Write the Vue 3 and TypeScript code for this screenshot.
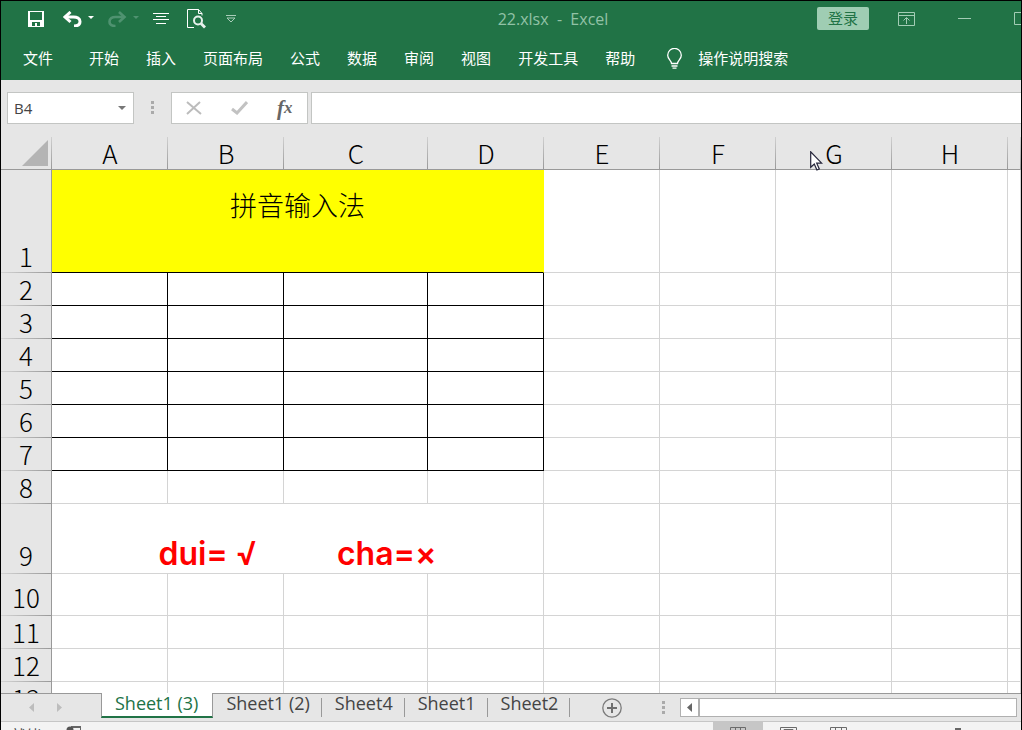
<script setup lang="ts">
import { ref } from 'vue'

interface Row {
  n: number
  size: string
}

const menus: string[] = ['文件', '开始', '插入', '页面布局', '公式', '数据', '审阅', '视图', '开发工具', '帮助']
const columns: string[] = ['A', 'B', 'C', 'D', 'E', 'F', 'G', 'H', '']
const rows: Row[] = [
  { n: 1, size: 'title' },
  ...[2, 3, 4, 5, 6, 7, 8].map((n) => ({ n, size: 'normal' })),
  { n: 9, size: 'tall' },
  { n: 10, size: 'medium' },
  { n: 11, size: 'normal' },
  { n: 12, size: 'normal' },
  { n: 13, size: 'normal' },
]
const sheets: string[] = ['Sheet1 (3)', 'Sheet1 (2)', 'Sheet4', 'Sheet1', 'Sheet2']

const activeSheet = ref(0)
const cellName = ref('B4')
const formula = ref('')

const isMerged = (n: number): boolean => n === 1 || n === 9
const isBoxed = (n: number, c: number): boolean => n >= 2 && n <= 7 && c < 4
</script>

<template>
  <div class="window">
    <header class="top">
      <div class="titlebar">
        <div class="quick">
          <button class="icon-btn save" aria-label="保存">
            <svg width="16" height="16" viewBox="0 0 16 16"><path fill="#fff" fill-rule="evenodd" d="M0 0h16v16H0zM2 1v8h12V1zM4 11v4h3v-3h2v3h3v-4z" /></svg>
          </button>
          <button class="icon-btn undo" aria-label="撤消">
            <svg width="32" height="16" viewBox="0 0 32 16"><path d="M2 6h8.500c3.500 0 6.500 1.500 6.500 4.500S14.500 15 11 15" fill="none" stroke="#fff" stroke-width="3" /><path d="M7.500 1L2 6l5.500 5" fill="none" stroke="#fff" stroke-width="3" /><path d="M25 5h6l-3 3z" fill="#fff" /></svg>
          </button>
          <button class="icon-btn redo" aria-label="恢复">
            <svg width="32" height="16" viewBox="0 0 32 16"><g fill="none" stroke="#4f9270" stroke-width="2.600"><path d="M16 6H7.500C4 6 1.500 7.500 1.500 10.500S4 15 7.500 15" /><path d="M11 1l5.500 5-5.500 5" /></g><path d="M25 5h6l-3 3z" fill="#4f9270" /></svg>
          </button>
          <button class="icon-btn align" aria-label="居中">
            <svg width="16" height="11" viewBox="0 0 16 11"><path d="M0 .5h16M3 3.500h10M0 6.500h16M3 10.500h10" stroke="#fff" /></svg>
          </button>
          <button class="icon-btn preview" aria-label="打印预览">
            <svg width="19" height="20" viewBox="0 0 19 20"><path d="M7 18.500H.5V.5h11l3.500 4v2M11.500.5v4H15" fill="none" stroke="#fff" /><circle cx="11" cy="11.500" r="4" fill="none" stroke="#e8f1ec" stroke-width="2" /><path d="M14 14.500l4 4" stroke="#e8f1ec" stroke-width="2.800" /></svg>
          </button>
          <button class="icon-btn more" aria-label="自定义快速访问工具栏">
            <svg width="10" height="8" viewBox="0 0 10 8"><path d="M0 .5h10M1 3l4 4 4-4z" fill="none" stroke="#a9cdb9" /></svg>
          </button>
        </div>
        <h1 class="doc-title">22.xlsx&nbsp; - &nbsp;Excel</h1>
        <div class="window-tools">
          <button class="login">登录</button>
          <button class="icon-btn ribbon-opt" aria-label="功能区显示选项">
            <svg width="17" height="14" viewBox="0 0 17 14"><path d="M.5.5h16v13H.5zM1 3.500h15M8.500 12V6M5.500 8.500l3-3 3 3" fill="none" stroke="#a3ccb5" /></svg>
          </button>
          <button class="icon-btn minimize" aria-label="最小化">
            <svg width="13" height="3" viewBox="0 0 13 3"><path d="M0 1.500h13" stroke="#a3ccb5" /></svg>
          </button>
          <button class="icon-btn maximize" aria-label="最大化">
            <svg width="14" height="14" viewBox="0 0 14 14"><path d="M.5.5h13v12H.5z" fill="none" stroke="#a3ccb5" /></svg>
          </button>
        </div>
      </div>
      <nav class="menu">
        <button v-for="m in menus" :key="m" class="menu-item">{{ m }}</button>
        <button class="menu-item tell">
          <svg width="15" height="21" viewBox="0 0 15 21"><path d="M4.500 15.500c0-3-3.800-4-3.800-8.300a6.800 6.800 0 0 1 13.600 0c0 4.300-3.800 5.300-3.800 8.300zM4.500 18h6M5.500 20.200h4" fill="none" stroke="#fff" stroke-width="1.300" /></svg>
          <span>操作说明搜索</span>
        </button>
      </nav>
    </header>

    <section class="formula-bar">
      <div class="name-box">
        <input v-model="cellName" aria-label="名称框" />
        <button class="icon-btn" aria-label="名称列表">
          <svg width="8" height="4" viewBox="0 0 8 4"><path d="M0 0h8L4 4z" fill="#777" /></svg>
        </button>
      </div>
      <svg class="grip" width="3" height="13" viewBox="0 0 3 13"><path d="M0 0h3v3H0zM0 5h3v3H0zM0 10h3v3H0z" fill="#aaa" /></svg>
      <div class="fx-group">
        <button class="icon-btn" aria-label="取消">
          <svg width="16" height="14" viewBox="0 0 16 14"><path d="M1 1l14 12M14 1L1 13" stroke="#bcbcbc" stroke-width="2" /></svg>
        </button>
        <button class="icon-btn" aria-label="输入">
          <svg width="17" height="14" viewBox="0 0 17 14"><path d="M1 8l5 4L16 1" fill="none" stroke="#c2c2c2" stroke-width="3" /></svg>
        </button>
        <button class="icon-btn fx" aria-label="插入函数"><i>f</i><i class="fx-x">x</i></button>
      </div>
      <input v-model="formula" class="formula" aria-label="编辑栏" />
    </section>

    <main class="grid-area">
      <table class="grid">
        <colgroup>
          <col class="col-head" />
          <col v-for="(c, i) in columns" :key="i" :class="i === 8 ? 'col-rest' : i === 2 ? 'col-wide' : 'col-std'" />
        </colgroup>
        <thead>
          <tr>
            <th class="corner" aria-label="全选">
              <svg width="26" height="26" viewBox="0 0 26 26"><path d="M26 0v26H0z" fill="#b4b4b4" /></svg>
            </th>
            <th v-for="(c, i) in columns" :key="i" scope="col">{{ c }}</th>
          </tr>
        </thead>
        <tbody>
          <tr v-for="r in rows" :key="r.n" :class="r.size">
            <th scope="row">{{ r.n }}</th>
            <td v-if="r.n === 1" colspan="4" class="heading">拼音输入法</td>
            <td v-if="r.n === 9" colspan="4" class="legend">
              <div class="legend-line"><span>dui= √</span><span>cha=×</span></div>
            </td>
            <template v-for="(c, i) in columns" :key="i">
              <td v-if="!isMerged(r.n) || i > 3" :class="{ boxed: isBoxed(r.n, i) }"></td>
            </template>
          </tr>
        </tbody>
      </table>
      <svg class="pointer" width="13" height="20" viewBox="0 0 13 20"><path d="M.7.8v15.500l3.600-3.300 2.600 6 2.400-1-2.600-5.800h5z" fill="#fff" stroke="#25253a" stroke-width="1.200" /></svg>
    </main>

    <footer class="sheet-bar">
      <div class="sheet-nav">
        <button class="icon-btn" aria-label="上一张">
          <svg width="5" height="9" viewBox="0 0 5 9"><path d="M5 0v9L0 4.500z" fill="#bdbdbd" /></svg>
        </button>
        <button class="icon-btn" aria-label="下一张">
          <svg width="5" height="9" viewBox="0 0 5 9"><path d="M0 0v9l5-4.500z" fill="#bdbdbd" /></svg>
        </button>
      </div>
      <button
        v-for="(s, i) in sheets"
        :key="i"
        class="sheet"
        :class="{ active: i === activeSheet }"
        @click="activeSheet = i"
      >{{ s }}</button>
      <button class="icon-btn add" aria-label="新工作表">
        <svg width="20" height="20" viewBox="0 0 20 20"><circle cx="10" cy="10" r="9.200" fill="none" stroke="#7b7b7b" stroke-width="1.300" /><path d="M5 10h10M10 5v10" stroke="#6f6f6f" stroke-width="2" /></svg>
      </button>
      <svg class="tab-grip" width="3" height="13" viewBox="0 0 3 13"><path d="M0 0h3v3H0zM0 5h3v3H0zM0 10h3v3H0z" fill="#aaa" /></svg>
      <div class="scroll">
        <button class="icon-btn scroll-left" aria-label="向左滚动">
          <svg width="5" height="9" viewBox="0 0 5 9"><path d="M5 0v9L0 4.500z" fill="#666" /></svg>
        </button>
        <div class="thumb"></div>
      </div>
    </footer>

    <div class="status">
      <span class="ready">就绪</span>
      <svg class="macro" width="15" height="14" viewBox="0 0 15 14"><path d="M5 1h10v12H3V7" fill="none" stroke="#666" stroke-width="2" /><circle cx="4" cy="4" r="3.500" fill="#555" /></svg>
      <div class="views">
        <button class="icon-btn view on" aria-label="普通">
          <svg width="16" height="14" viewBox="0 0 16 14"><path d="M.5.5h15v13H.5zM5.500 0v14M10.500 0v14M0 5h16M0 9.500h16" fill="none" stroke="#6b6b6b" /></svg>
        </button>
        <button class="icon-btn view" aria-label="页面布局">
          <svg width="17" height="14" viewBox="0 0 17 14"><path d="M.5.5h16v13H.5zM4 2.500h9v9H4zM6 5h5M6 7.500h5" fill="none" stroke="#6b6b6b" /></svg>
        </button>
        <button class="icon-btn view" aria-label="分页预览">
          <svg width="17" height="14" viewBox="0 0 17 14"><path d="M.5.5h16v13H.5zM5.500 0v8M11.500 0v8M0 8h17" fill="none" stroke="#6b6b6b" /></svg>
        </button>
      </div>
      <span class="zoom-thumb"></span>
    </div>
  </div>
</template>

<style>
html,
body {
  margin: 0;
  overflow: hidden;
}
</style>

<style scoped>
* {
  box-sizing: border-box;
}
.window {
  display: flex;
  flex-direction: column;
  height: 100vh;
  overflow: hidden;
  border: 1px solid #000;
  border-bottom: 0;
  background: #e6e6e6;
  font-family: "Open Sans", "Noto Sans CJK SC", sans-serif;
  color: #444;
}
button,
input {
  margin: 0;
  padding: 0;
  border: 0;
  background: none;
  font: inherit;
  color: inherit;
}
svg {
  display: block;
  flex: none;
}
.icon-btn {
  display: flex;
  align-items: center;
  justify-content: center;
  flex: none;
}
.top {
  flex: none;
  background: #217346;
  color: #fff;
}
.titlebar {
  display: grid;
  grid-template-columns: 1fr auto 1fr;
  align-items: center;
  height: 35px;
}
.quick {
  display: flex;
  align-items: center;
  padding-left: 27px;
}
.undo {
  margin-left: 19px;
}
.redo {
  margin-left: 13px;
}
.align {
  margin-left: 13px;
}
.preview {
  margin-left: 18px;
}
.more {
  margin-left: 20px;
}
.doc-title {
  margin: 0 0 0 84px;
  font-size: 16px;
  line-height: 24px;
  font-weight: 400;
  color: #92c2a6;
}
.window-tools {
  display: flex;
  align-items: center;
  justify-content: flex-end;
  overflow: hidden;
  height: 100%;
}
.login {
  flex: none;
  width: 52px;
  height: 23px;
  border-radius: 2px;
  background: #9fcdb3;
  color: #217346;
  font-size: 15px;
  line-height: 23px;
}
.ribbon-opt {
  margin-left: 29px;
}
.minimize {
  margin-left: 43px;
}
.maximize {
  margin: 0 -7px 0 43px;
}
.menu {
  display: flex;
  align-items: center;
  gap: 27px;
  height: 44px;
  padding: 0 0 0 22px;
  font-size: 15px;
}
.menu-item {
  flex: none;
  line-height: 24px;
}
.menu-item:first-child {
  margin-right: 9px;
}
.tell {
  display: flex;
  align-items: center;
  gap: 16px;
  margin-left: 5px;
}
.formula-bar {
  flex: none;
  display: flex;
  align-items: center;
  height: 57px;
  padding: 0 0 2px 6px;
}
.name-box,
.fx-group,
.formula {
  height: 32px;
  border: 1px solid #c3c5c3;
  background: #fff;
}
.name-box {
  display: flex;
  align-items: center;
  width: 127px;
  padding: 0 7px 0 6px;
}
.name-box input {
  flex: 1;
  min-width: 0;
  font-size: 15px;
}
.grip {
  margin: 0 17px;
}
.fx-group {
  display: flex;
  align-items: center;
  gap: 29px;
  width: 137px;
  margin-right: 3px;
  padding-left: 14px;
}
.fx {
  font-family: "Liberation Serif", serif;
  font-size: 21px;
  line-height: 24px;
  font-weight: 700;
  color: #666;
}
.fx-x {
  font-size: 17px;
}
.formula {
  flex: 1;
  min-width: 0;
  border-right: 0;
  padding: 0 6px;
  font-size: 15px;
}
.grid-area {
  position: relative;
  flex: 1;
  min-height: 0;
  overflow: hidden;
  background: #fff;
}
.grid {
  width: 100%;
  table-layout: fixed;
  border-collapse: separate;
  border-spacing: 0;
  font-family: "Noto Sans CJK SC", sans-serif;
}
.col-head {
  width: 51px;
}
.col-std {
  width: 116px;
}
.col-wide {
  width: 144px;
}
th,
td {
  padding: 0;
}
th {
  font-size: 26px;
  line-height: 28px;
  font-weight: 300;
  color: #000;
  background: #e6e6e6;
}
thead th {
  height: 33px;
  border-bottom: 1px solid #999;
  background: linear-gradient(#d0d0d0, #999) right / 1px 100% no-repeat #e6e6e6;
}
thead .corner {
  padding: 0 4px 3px 0;
  vertical-align: bottom;
}
.corner svg {
  margin-left: auto;
}
tbody th {
  border-right: 1px solid #999;
  background: linear-gradient(90deg, #d4d4d4, #999) bottom / 100% 1px no-repeat #e6e6e6;
  vertical-align: bottom;
  padding-bottom: 3px;
}
tbody td {
  border-right: 1px solid #d4d4d4;
  border-bottom: 1px solid #d4d4d4;
}
tbody .boxed {
  border-color: #000;
}
.title {
  height: 103px;
}
.normal {
  height: 33px;
}
.tall {
  height: 70px;
}
.medium {
  height: 42px;
}
.tall th,
.medium th {
  padding-bottom: 5px;
}
tbody .heading {
  padding-top: 15px;
  border-right-color: #ff0;
  border-bottom-color: #000;
  background: #ff0;
  color: #000;
  font-size: 27px;
  font-weight: 300;
  line-height: 40px;
  text-align: center;
  vertical-align: top;
}
.legend {
  vertical-align: bottom;
}
.legend-line {
  display: flex;
  justify-content: center;
  gap: 80px;
  color: #f00;
  font-family: "Inter", sans-serif;
  font-size: 32px;
  line-height: 38px;
  font-weight: 600;
}
.pointer {
  position: absolute;
  left: 809px;
  top: 14px;
}
.sheet-bar {
  flex: none;
  display: flex;
  align-items: flex-start;
  height: 29px;
  border-top: 1px solid #999;
  border-bottom: 1px solid #c6c6c6;
}
.sheet-nav {
  display: flex;
  gap: 23px;
  width: 100px;
  padding: 9px 0 0 28px;
}
.sheet {
  position: relative;
  flex: none;
  height: 24px;
  padding: 0 12px 6px 13px;
  font-size: 18px;
  line-height: 18px;
}
.sheet:not(.active)::after {
  content: "";
  position: absolute;
  right: 0;
  top: 4px;
  width: 1px;
  height: 19px;
  background: #999;
}
.sheet.active {
  height: 25px;
  margin-top: -1px;
  padding: 0 14px 3px 13px;
  border: solid #999;
  border-width: 0 1px;
  border-bottom: 2px solid #217346;
  background: #fff;
  color: #217346;
}
.add {
  margin: 4px 0 0 32px;
}
.tab-grip {
  margin: 7px 15px 0 40px;
}
.scroll {
  display: flex;
  flex: 1;
  height: 19px;
  margin: 4px 4px 0 0;
  border: 1px solid #b0b0b0;
  background: #fff;
}
.scroll-left {
  width: 17px;
}
.thumb {
  flex: 1;
  border-left: 2px solid #b0b0b0;
}
.status {
  flex: none;
  display: flex;
  align-items: flex-start;
  height: 8px;
  padding-left: 10px;
  overflow: hidden;
  background: #f3f3f3;
}
.ready {
  margin-top: 3px;
  font-size: 15px;
  line-height: 20px;
}
.macro {
  margin: 4px 0 0 25px;
}
.views {
  display: flex;
  margin-left: auto;
}
.view {
  width: 50px;
  height: 24px;
}
.view.on {
  background: #c6c6c6;
}
.zoom-thumb {
  width: 6px;
  height: 14px;
  margin: 6px 60px 0 92px;
  background: #666;
}
</style>
